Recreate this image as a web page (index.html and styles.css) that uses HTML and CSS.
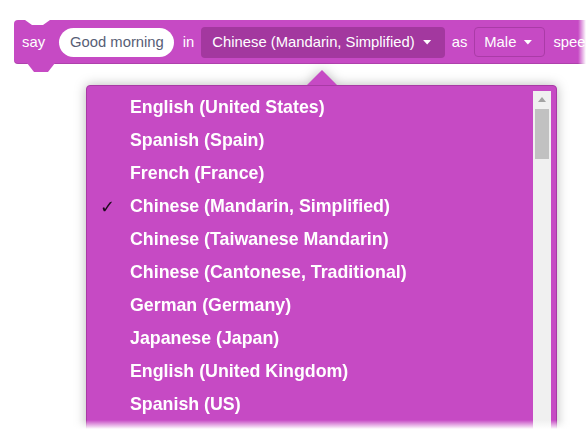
FILE: index.html
```
<!DOCTYPE html>
<html>
<head>
<meta charset="utf-8">
<link rel="stylesheet" href="styles.css">
</head>
<body>
<div class="stage">
  <div class="block">
    <span class="label say">say</span>
    <span class="pill">Good morning</span>
    <span class="label in">in</span>
    <span class="drop dark">Chinese (Mandarin, Simplified)<i class="caret"></i></span>
    <span class="label as">as</span>
    <span class="drop outline">Male<i class="caret"></i></span>
    <span class="label speed">spee</span>
  </div>

  <div class="popup">
    <div class="pointer"></div>
    <div class="menu">
      <ul class="items">
        <li class="item"><span class="check"></span>English (United States)</li>
        <li class="item"><span class="check"></span>Spanish (Spain)</li>
        <li class="item"><span class="check"></span>French (France)</li>
        <li class="item selected"><span class="check">✓</span>Chinese (Mandarin, Simplified)</li>
        <li class="item"><span class="check"></span>Chinese (Taiwanese Mandarin)</li>
        <li class="item"><span class="check"></span>Chinese (Cantonese, Traditional)</li>
        <li class="item"><span class="check"></span>German (Germany)</li>
        <li class="item"><span class="check"></span>Japanese (Japan)</li>
        <li class="item"><span class="check"></span>English (United Kingdom)</li>
        <li class="item"><span class="check"></span>Spanish (US)</li>
      </ul>
      <div class="scrollbar">
        <div class="up"></div>
        <div class="thumb"></div>
      </div>
    </div>
  </div>

  <div class="fade-right"></div>
  <div class="fade-bottom"></div>
</div>
</body>
</html>
```

FILE: styles.css
```
html, body {
  margin: 0;
  padding: 0;
  background: #ffffff;
}

.stage {
  position: relative;
  width: 586px;
  height: 429px;
  overflow: hidden;
  padding: 20px 0 0 14px;
  box-sizing: border-box;
  font-family: "Liberation Sans", Arial, sans-serif;
}

/* ---------- Scratch block ---------- */
.block {
  position: relative;
  display: inline-flex;
  align-items: center;
  height: 44px;
  padding-left: 8px;
  padding-right: 40px;
  background: #c64ac4;
  border-radius: 4px 0 0 4px;
  box-shadow: inset 0 -1px 0 rgba(0, 0, 0, 0.12);
  white-space: nowrap;
  color: #ffffff;
  font-size: 14.8px;
}

.block::before {
  content: "";
  position: absolute;
  left: 11px;
  top: 0;
  width: 25px;
  height: 5px;
  background: #ffffff;
  clip-path: polygon(0 0, 100% 0, 72% 100%, 28% 100%);
}

.block::after {
  content: "";
  position: absolute;
  left: 13px;
  top: 43px;
  width: 28px;
  height: 9px;
  background: #c64ac4;
  clip-path: polygon(0 0, 100% 0, 75% 100%, 25% 100%);
}

.label {
  flex-shrink: 0;
}

.say { margin-right: 14px; }
.in { margin: 0 7px 0 9px; }
.as { margin: 0 7px 0 7px; }
.speed { margin-left: 8px; }

.pill {
  display: inline-flex;
  align-items: center;
  height: 29px;
  padding: 0 10px 0 11px;
  background: #ffffff;
  color: #575e75;
  border-radius: 15px;
}

.drop {
  display: inline-flex;
  align-items: center;
  box-sizing: border-box;
  border-radius: 4px;
}

.dark {
  height: 31px;
  padding: 0 13px 0 11px;
  background: #a3389f;
}

.outline {
  height: 30px;
  padding: 0 12px 0 9px;
  border: 1px solid #aa3ba7;
}

.caret {
  display: inline-block;
  width: 9px;
  height: 5px;
  margin-left: 8px;
  background: #ffffff;
  clip-path: polygon(0 0, 100% 0, 50% 100%);
}

.outline .caret {
  margin-left: 7px;
}

/* ---------- Dropdown popup ---------- */
.popup {
  position: absolute;
  left: 86px;
  top: 70px;
  width: 471px;
  filter: drop-shadow(0 0 6px rgba(0, 0, 0, 0.28));
}

.pointer {
  margin-left: 221px;
  width: 30px;
  height: 15px;
  background: #c64ac4;
  clip-path: polygon(50% 0, 100% 100%, 0 100%);
}

.menu {
  position: relative;
  height: 400px;
  box-sizing: border-box;
  background: #c64ac4;
  border: 1px solid #a83aa5;
  border-radius: 4px;
}

.items {
  list-style: none;
  margin: 0;
  padding: 5px 0 0 0;
}

.item {
  display: flex;
  align-items: center;
  height: 33px;
  color: #ffffff;
  font-weight: bold;
  font-size: 17.8px;
  white-space: nowrap;
}

.check {
  display: inline-block;
  width: 30px;
  padding-left: 13px;
  color: #1c0a1c;
  font-weight: bold;
  font-size: 18px;
  font-family: "DejaVu Sans", sans-serif;
}

.scrollbar {
  position: absolute;
  top: 5px;
  right: 5px;
  width: 18px;
  height: 420px;
  background: #f0f0f0;
}

.up {
  width: 8px;
  height: 5px;
  margin: 6px auto 0;
  background: #a3a3a3;
  clip-path: polygon(50% 0, 100% 100%, 0 100%);
}

.thumb {
  width: 14px;
  height: 50px;
  margin: 7px auto 0;
  background: #c1c1c1;
}

/* ---------- edge fades ---------- */
.fade-right {
  position: absolute;
  top: 0;
  right: 0;
  width: 8px;
  height: 100%;
  background: linear-gradient(to right, rgba(255, 255, 255, 0), #ffffff);
}

.fade-bottom {
  position: absolute;
  left: 0;
  bottom: 0;
  width: 100%;
  height: 9px;
  background: linear-gradient(to bottom, rgba(255, 255, 255, 0), #ffffff);
}
```
